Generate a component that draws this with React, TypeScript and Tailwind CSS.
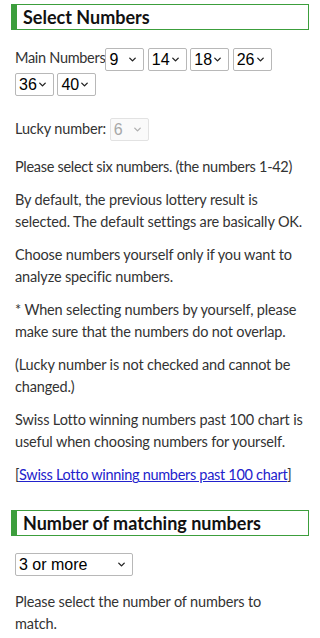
import { ChevronDown } from 'lucide-react';

const mainNumbers = [9, 14, 18, 26, 36, 40];
const range = Array.from({ length: 42 }, (_, i) => i + 1);

function Heading({ children }: { children: React.ReactNode }) {
  return (
    <h2 className="mx-[11px] border border-l-[6px] border-[#3c9e3c] border-l-double px-[6px] text-[18px] font-bold leading-[24px] tracking-normal text-[#111]">
      {children}
    </h2>
  );
}

function Select({
  value,
  disabled,
  width,
  children,
}: {
  value: string | number;
  disabled?: boolean;
  width: string;
  children: React.ReactNode;
}) {
  return (
    <span className="relative inline-block align-middle">
      <select
        defaultValue={value}
        disabled={disabled}
        className={`block h-[23px] ${width} appearance-none rounded-[2px] border border-[#b8b8b8] bg-white pl-[3px] font-['Liberation_Sans',Arial,sans-serif] text-[16px] leading-[21px] tracking-normal text-black disabled:border-[#e2e2e2] disabled:bg-[#fafafa] disabled:text-[#a8a8a8]`}
      >
        {children}
      </select>
      <ChevronDown
        size={11}
        strokeWidth={3}
        className={`pointer-events-none absolute right-[6px] top-[6px] ${disabled ? 'text-[#b0b0b0]' : 'text-[#222]'}`}
      />
    </span>
  );
}

function NumberSelect({ value, disabled }: { value: number; disabled?: boolean }) {
  return (
    <Select value={value} disabled={disabled} width="w-[39px]">
      {range.map((n) => (
        <option key={n} value={n}>
          {n}
        </option>
      ))}
    </Select>
  );
}

export default function App() {
  return (
    <div className="bg-white pt-[4px] pb-4 font-['Lato','Noto_Sans',sans-serif] text-[14.5px] leading-[22px] tracking-[-0.15px] text-[#333]">
      <Heading>Select Numbers</Heading>

      <div className="pl-[15px] pr-[14px]">
        <div className="mt-[16px] leading-[24px] tracking-[-0.3px]">
          Main Numbers
          {mainNumbers.map((n, i) => (
            <span key={i}>
              <NumberSelect value={n} />{' '}
            </span>
          ))}
        </div>

        <div className="mt-[22px]">
          Lucky number: <NumberSelect value={6} disabled />
        </div>

        <p className="mt-[15px] tracking-[-0.3px]">Please select six numbers. (the numbers 1-42)</p>
        <p className="mt-[11px]">
          By default, the previous lottery result is selected. The default settings are basically OK.
        </p>
        <p className="mt-[11px]">Choose numbers yourself only if you want to analyze specific numbers.</p>
        <p className="mt-[11px]">
          * When selecting numbers by yourself, please make sure that the numbers do not overlap.
        </p>
        <p className="mt-[11px]">(Lucky number is not checked and cannot be changed.)</p>
        <p className="mt-[11px]">
          Swiss Lotto winning numbers past 100 chart is useful when choosing numbers for yourself.
        </p>
        <p className="mt-[11px] tracking-[-0.3px]">
          [
          <a href="#" className="text-[#2222cc] underline">
            Swiss Lotto winning numbers past 100 chart
          </a>
          ]
        </p>
      </div>

      <div className="mt-[24px]">
        <Heading>Number of matching numbers</Heading>
      </div>

      <div className="mt-[16px] pl-[15px] pr-[14px]">
        <Select value="3" width="w-[118px]">
          <option value="3">3 or more</option>
          <option value="4">4 or more</option>
          <option value="5">5 or more</option>
          <option value="6">6 or more</option>
        </Select>
        <p className="mt-[15px]">Please select the number of numbers to match.</p>
      </div>
    </div>
  );
}
